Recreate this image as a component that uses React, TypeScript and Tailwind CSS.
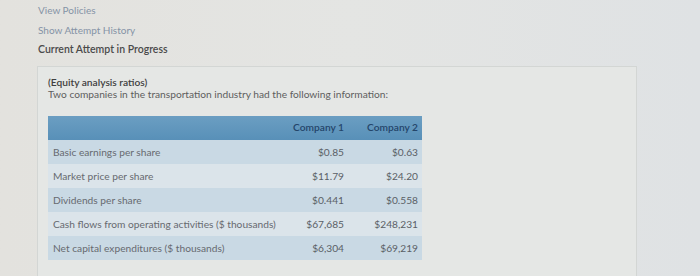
const rows = [
  { label: "Basic earnings per share", c1: "$0.85", c2: "$0.63" },
  { label: "Market price per share", c1: "$11.79", c2: "$24.20" },
  { label: "Dividends per share", c1: "$0.441", c2: "$0.558" },
  { label: "Cash flows from operating activities ($ thousands)", c1: "$67,685", c2: "$248,231" },
  { label: "Net capital expenditures ($ thousands)", c1: "$6,304", c2: "$69,219" },
];

export default function App() {
  return (
    <div
      className="w-[700px] h-[276px] overflow-hidden bg-gradient-to-r from-[#e3e2de] via-[#e4e5e3] to-[#dfe2e4] text-[#555]"
      style={{ fontFamily: "Lato, 'Open Sans', sans-serif" }}
    >
      <div className="pl-[38px] pt-[1px] flex flex-col text-[10px] leading-[19.5px]">
        <a className="text-[#8593a6]">View Policies</a>
        <a className="text-[#8593a6]">Show Attempt History</a>
        <span className="text-[#4a4a4a] font-semibold text-[10.5px]">Current Attempt in Progress</span>
      </div>
      <div className="ml-[37px] mt-[6px] w-[600px] h-[220px] border border-[#d3d6d4] bg-[#e5e7e5] pl-[10px] pt-[9px]">
        <p className="text-[10.2px] leading-[12px] text-[#3f3f3f] font-semibold">(Equity analysis ratios)</p>
        <p className="text-[10.2px] leading-[12px] text-[#5e5e5e]">
          Two companies in the transportation industry had the following information:
        </p>
        <table className="mt-[16px] w-[374px] table-fixed border-collapse text-[10.2px] whitespace-nowrap">
          <thead>
            <tr className="h-[24px] bg-gradient-to-b from-[#6b9ec2] to-[#5890b8]">
              <th className="w-[226px] text-left"></th>
              <th className="w-[72px] text-right pr-[2px] font-semibold text-[#24456a]">Company 1</th>
              <th className="w-[76px] text-right pr-[4px] font-semibold text-[#24456a]">Company 2</th>
            </tr>
          </thead>
          <tbody>
            {rows.map((r, i) => (
              <tr key={r.label} className={`h-[24px] ${i % 2 === 0 ? "bg-[#c9d9e4]" : "bg-[#dbe4ea]"}`}>
                <td className="pl-[5px] pt-[2px] text-[#676a70]">{r.label}</td>
                <td className="text-right pt-[2px] pr-[2px] text-[#5a5f66]">{r.c1}</td>
                <td className="text-right pt-[2px] pr-[4px] text-[#5a5f66]">{r.c2}</td>
              </tr>
            ))}
          </tbody>
        </table>
      </div>
    </div>
  );
}
